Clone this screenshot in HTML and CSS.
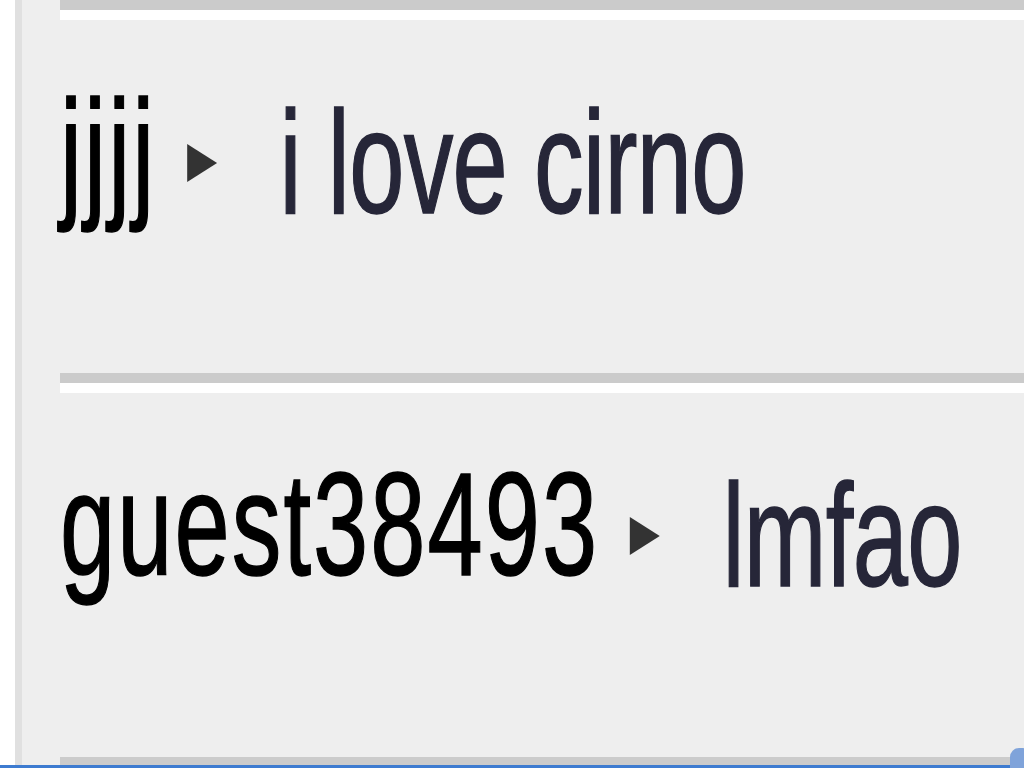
FILE: index.html
```html
<!DOCTYPE html>
<html lang="en">
<head>
<meta charset="utf-8">
<title>Chat</title>
<link rel="stylesheet" href="styles.css">
</head>
<body>
<div class="app">
  <div class="gutter"></div>
  <div class="rail"></div>
  <div class="chat">
    <div class="msg msg-prev"></div>
    <div class="msg msg-first">
      <div class="line"><span class="name">jjjj</span><svg class="arrow" width="53" height="54" viewBox="0 0 53 54"><polygon points="5,8 49,27 5,46" fill="#333"/></svg><span class="text">i love cirno</span></div>
    </div>
    <div class="msg msg-last">
      <div class="line"><span class="name">guest38493</span><svg class="arrow" width="53" height="54" viewBox="0 0 53 54"><polygon points="5,8 49,27 5,46" fill="#333"/></svg><span class="text">lmfao</span></div>
    </div>
  </div>
</div>
<div class="statusbar"></div>
<div class="corner"></div>
</body>
</html>
```

FILE: styles.css
```css
html, body {
  margin: 0;
  padding: 0;
  height: 768px;
  overflow: hidden;
  background: #ffffff;
}

body {
  display: flex;
  flex-direction: column;
  font-family: "Liberation Sans", Arial, sans-serif;
}

.app {
  flex: 1;
  display: flex;
  min-height: 0;
  overflow: hidden;
}

.gutter {
  width: 15px;
  flex: none;
  background: #ffffff;
}

.rail {
  width: 7px;
  flex: none;
  background: #e0e0e0;
}

.chat {
  flex: 1;
  background: #eeeeee;
  padding-left: 38px;
  display: flex;
  flex-direction: column;
  overflow: hidden;
}

.msg {
  flex: none;
  border-top: 10px solid #ffffff;
  border-bottom: 10px solid #cbcbcb;
  padding-top: 59px;
  box-sizing: content-box;
}

.msg-prev {
  border-top: 0;
  padding-top: 0;
  height: 0;
}

.msg-first {
  height: 294px;
}

.msg-last {
  height: 305px;
}

.line {
  font-size: 146px;
  line-height: 146px;
  white-space: nowrap;
  transform: scaleX(0.68);
  transform-origin: 0 0;
  -webkit-text-stroke: 1.5px currentColor;
}

.name {
  color: #000000;
  letter-spacing: 3px;
}

.arrow {
  vertical-align: middle;
  margin-left: 40px;
  margin-right: 88px;
}

.text {
  color: #262638;
  letter-spacing: -1px;
  vertical-align: -11px;
}

.statusbar {
  flex: none;
  height: 3px;
  background: #3d7bd0;
}

.corner {
  position: absolute;
  left: 1010px;
  top: 748px;
  width: 22px;
  height: 26px;
  border-radius: 9px 9px 4px 4px;
  background: #7fa3da;
}
```
